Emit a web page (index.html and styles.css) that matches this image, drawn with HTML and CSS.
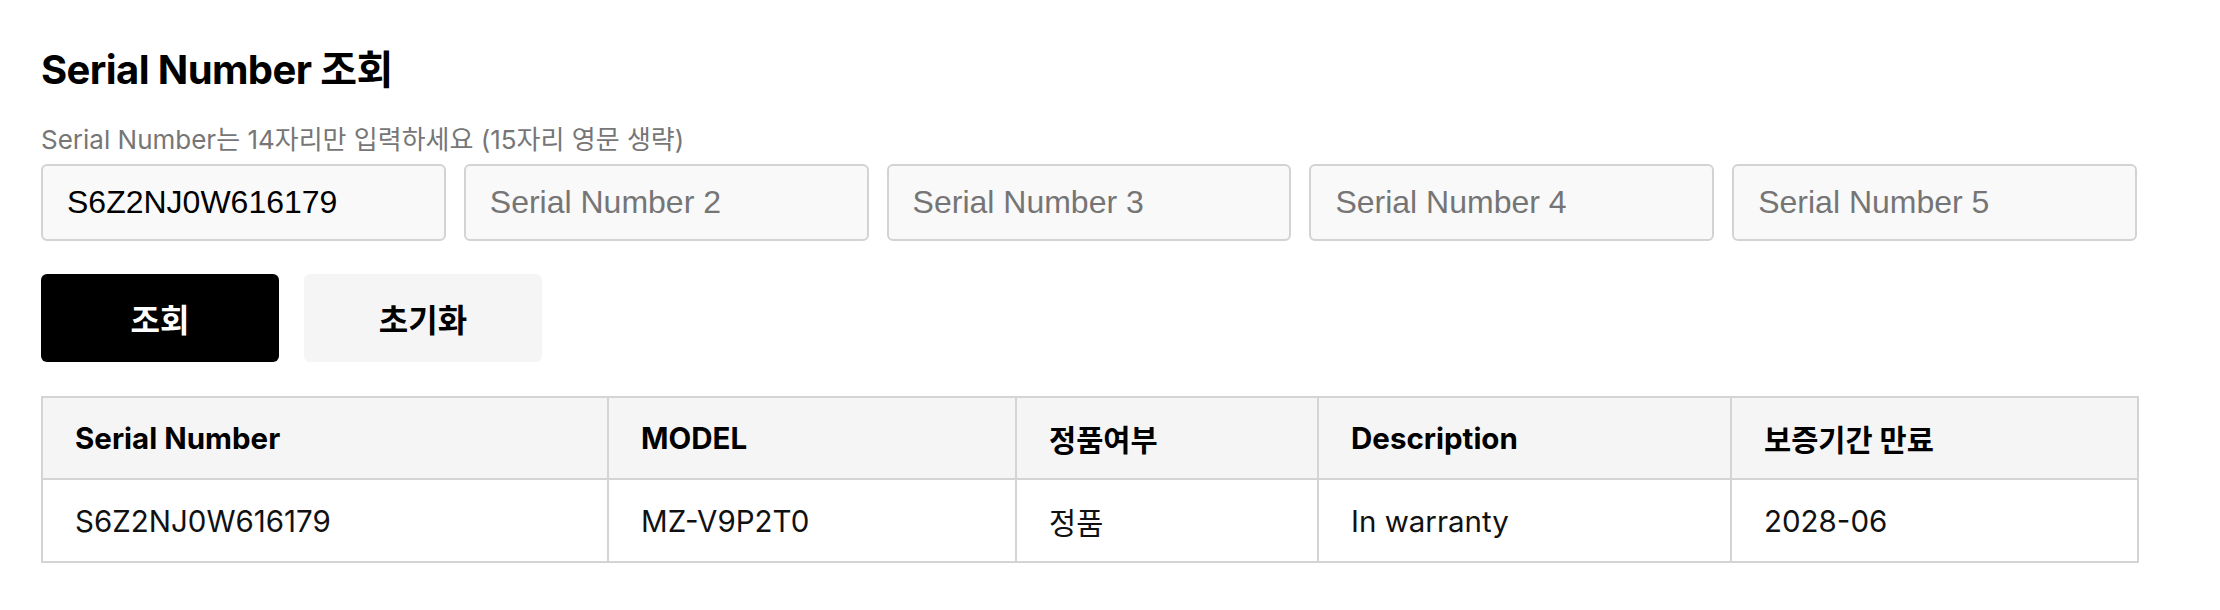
FILE: index.html
```html
<!DOCTYPE html>
<html lang="ko">
<head>
<meta charset="utf-8">
<title>Serial Number 조회</title>
<link rel="stylesheet" href="styles.css">
</head>
<body>
<main class="page">
  <h1 class="title">Serial Number 조회</h1>
  <p class="hint">Serial Number는 14자리만 입력하세요 (15자리 영문 생략)</p>
  <div class="inputs">
    <input class="sn" type="text" value="S6Z2NJ0W616179">
    <input class="sn" type="text" placeholder="Serial Number 2">
    <input class="sn" type="text" placeholder="Serial Number 3">
    <input class="sn" type="text" placeholder="Serial Number 4">
    <input class="sn" type="text" placeholder="Serial Number 5">
  </div>
  <div class="actions">
    <button class="btn btn-primary" type="button">조회</button>
    <button class="btn btn-secondary" type="button">초기화</button>
  </div>
  <table class="result">
    <colgroup>
      <col class="c1"><col class="c2"><col class="c3"><col class="c4"><col class="c5">
    </colgroup>
    <thead>
      <tr>
        <th>Serial Number</th>
        <th>MODEL</th>
        <th>정품여부</th>
        <th>Description</th>
        <th>보증기간 만료</th>
      </tr>
    </thead>
    <tbody>
      <tr>
        <td>S6Z2NJ0W616179</td>
        <td>MZ-V9P2T0</td>
        <td>정품</td>
        <td>In warranty</td>
        <td>2028-06</td>
      </tr>
    </tbody>
  </table>
</main>
</body>
</html>
```

FILE: styles.css
```css
html, body {
  margin: 0;
  padding: 0;
  background: #ffffff;
}

body {
  font-family: "Inter", "Noto Sans CJK KR", sans-serif;
  color: #000;
}

.page {
  width: 2096px;
  padding: 46px 0 0 41px;
}

.title {
  margin: 0;
  font-size: 40px;
  line-height: 48px;
  font-weight: 700;
  letter-spacing: -0.6px;
}

.hint {
  margin: 29px 0 0;
  font-size: 26px;
  line-height: 34px;
  color: #767676;
}

.inputs {
  display: grid;
  grid-template-columns: repeat(5, 1fr);
  gap: 18px;
  margin-top: 7px;
}

.sn {
  box-sizing: border-box;
  width: 100%;
  height: 77px;
  margin: 0;
  padding: 0 24px;
  border: 2px solid #d3d3d3;
  border-radius: 6px;
  background: #f9f9f9;
  font-family: "Liberation Sans", Arial, sans-serif;
  font-size: 32px;
  color: #000;
  outline: none;
}

.sn::placeholder {
  color: #757575;
  opacity: 1;
}

.actions {
  display: flex;
  gap: 25px;
  margin-top: 33px;
}

.btn {
  width: 238px;
  height: 88px;
  border: none;
  border-radius: 6px;
  font-family: "Inter", "Noto Sans CJK KR", sans-serif;
  font-size: 32px;
  font-weight: 700;
  padding: 0;
}

.btn-primary {
  background: #000;
  color: #fff;
}

.btn-secondary {
  background: #f5f5f5;
  color: #000;
}

.result {
  margin-top: 34px;
  width: 2096px;
  table-layout: fixed;
  border-collapse: collapse;
  font-size: 29.5px;
}

.c1 { width: 566px; }
.c2 { width: 408px; }
.c3 { width: 302px; }
.c4 { width: 413px; }
.c5 { width: 407px; }

.result th,
.result td {
  border: 2px solid #d4d4d4;
  padding: 0 32px;
  text-align: left;
  white-space: nowrap;
}

.result th {
  height: 80px;
  background: #f5f5f5;
  font-weight: 700;
}

.result td {
  height: 81px;
  font-weight: 400;
  color: #111;
}
```
